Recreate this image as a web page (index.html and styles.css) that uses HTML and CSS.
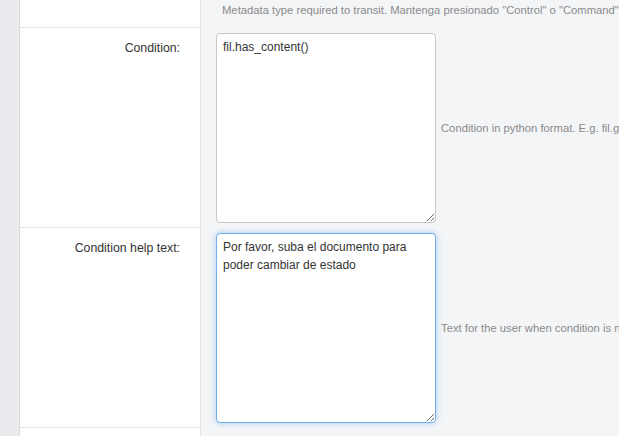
FILE: index.html
```html
<!DOCTYPE html>
<html lang="en">
<head>
<meta charset="utf-8">
<title>Transition form</title>
<link rel="stylesheet" href="styles.css">
</head>
<body>
<div class="page">
  <div class="strip"></div>
  <div class="form">
    <div class="row row-top">
      <div class="label"></div>
      <div class="field field-top">
        <span class="help help-top">Metadata type required to transit. Mantenga presionado "Control" o "Command" en un Mac, para seleccionar más de una opción.</span>
      </div>
    </div>
    <div class="row">
      <div class="label"><label for="cond">Condition:</label></div>
      <div class="field">
        <textarea id="cond" class="input">fil.has_content()</textarea>
        <span class="help">Condition in python format. E.g. fil.get_metadata_value('x') == 'y'</span>
      </div>
    </div>
    <div class="row">
      <div class="label"><label for="condhelp">Condition help text:</label></div>
      <div class="field">
        <textarea id="condhelp" class="input focus">Por favor, suba el documento para poder cambiar de estado</textarea>
        <span class="help">Text for the user when condition is not accomplished</span>
      </div>
    </div>
    <div class="row row-last">
      <div class="label"></div>
      <div class="field"></div>
    </div>
  </div>
</div>
</body>
</html>
```
FILE: styles.css
```css
html, body {
  margin: 0;
  padding: 0;
  height: 100%;
  overflow: hidden;
}
body {
  background: #f4f5f7;
  font-family: "Liberation Sans", Arial, sans-serif;
  font-size: 12px;
  color: #333;
}
.page {
  display: flex;
  min-height: 100%;
}
.strip {
  width: 19px;
  flex-shrink: 0;
  background: #eaebee;
}
.form {
  flex: 1;
  min-width: 0;
  display: flex;
  flex-direction: column;
}
.row {
  display: flex;
}
.label {
  width: 160px;
  flex-shrink: 0;
  box-sizing: content-box;
  background: #fff;
  border-left: 1px solid #dcdcdc;
  border-right: 1px solid #e2e2e2;
  border-bottom: 1px solid #e4e4e4;
  text-align: right;
  padding: 11px 20px 0 0;
  font-size: 12.3px;
  line-height: 18px;
}
.row-top .label {
  height: 18px;
  padding-top: 9px;
}
.row-last {
  flex: 1;
}
.row-last .label {
  border-bottom: none;
}
.field {
  flex: 1;
  min-width: 0;
  display: flex;
  align-items: center;
  padding: 5px 0 5px 15px;
  white-space: nowrap;
  overflow: hidden;
}
.field-top {
  align-items: flex-start;
  padding: 3px 0 0 20px;
}
.input {
  width: 220px;
  height: 190px;
  box-sizing: border-box;
  flex-shrink: 0;
  margin: 0;
  padding: 4px 6px;
  border: 1px solid #c8c8c8;
  border-radius: 4px;
  background: #fff;
  font-family: "Liberation Sans", Arial, sans-serif;
  font-size: 12px;
  line-height: 18px;
  color: #333;
  resize: vertical;
  outline: none;
  white-space: pre-wrap;
}
.focus {
  border-color: #72aef0;
  box-shadow: 0 0 6px rgba(102, 170, 240, 0.55);
}
.help {
  margin-left: 5px;
  font-size: 11.25px;
  line-height: 14px;
  color: #8a8a8a;
}
.help-top {
  margin-left: 1px;
}
```
